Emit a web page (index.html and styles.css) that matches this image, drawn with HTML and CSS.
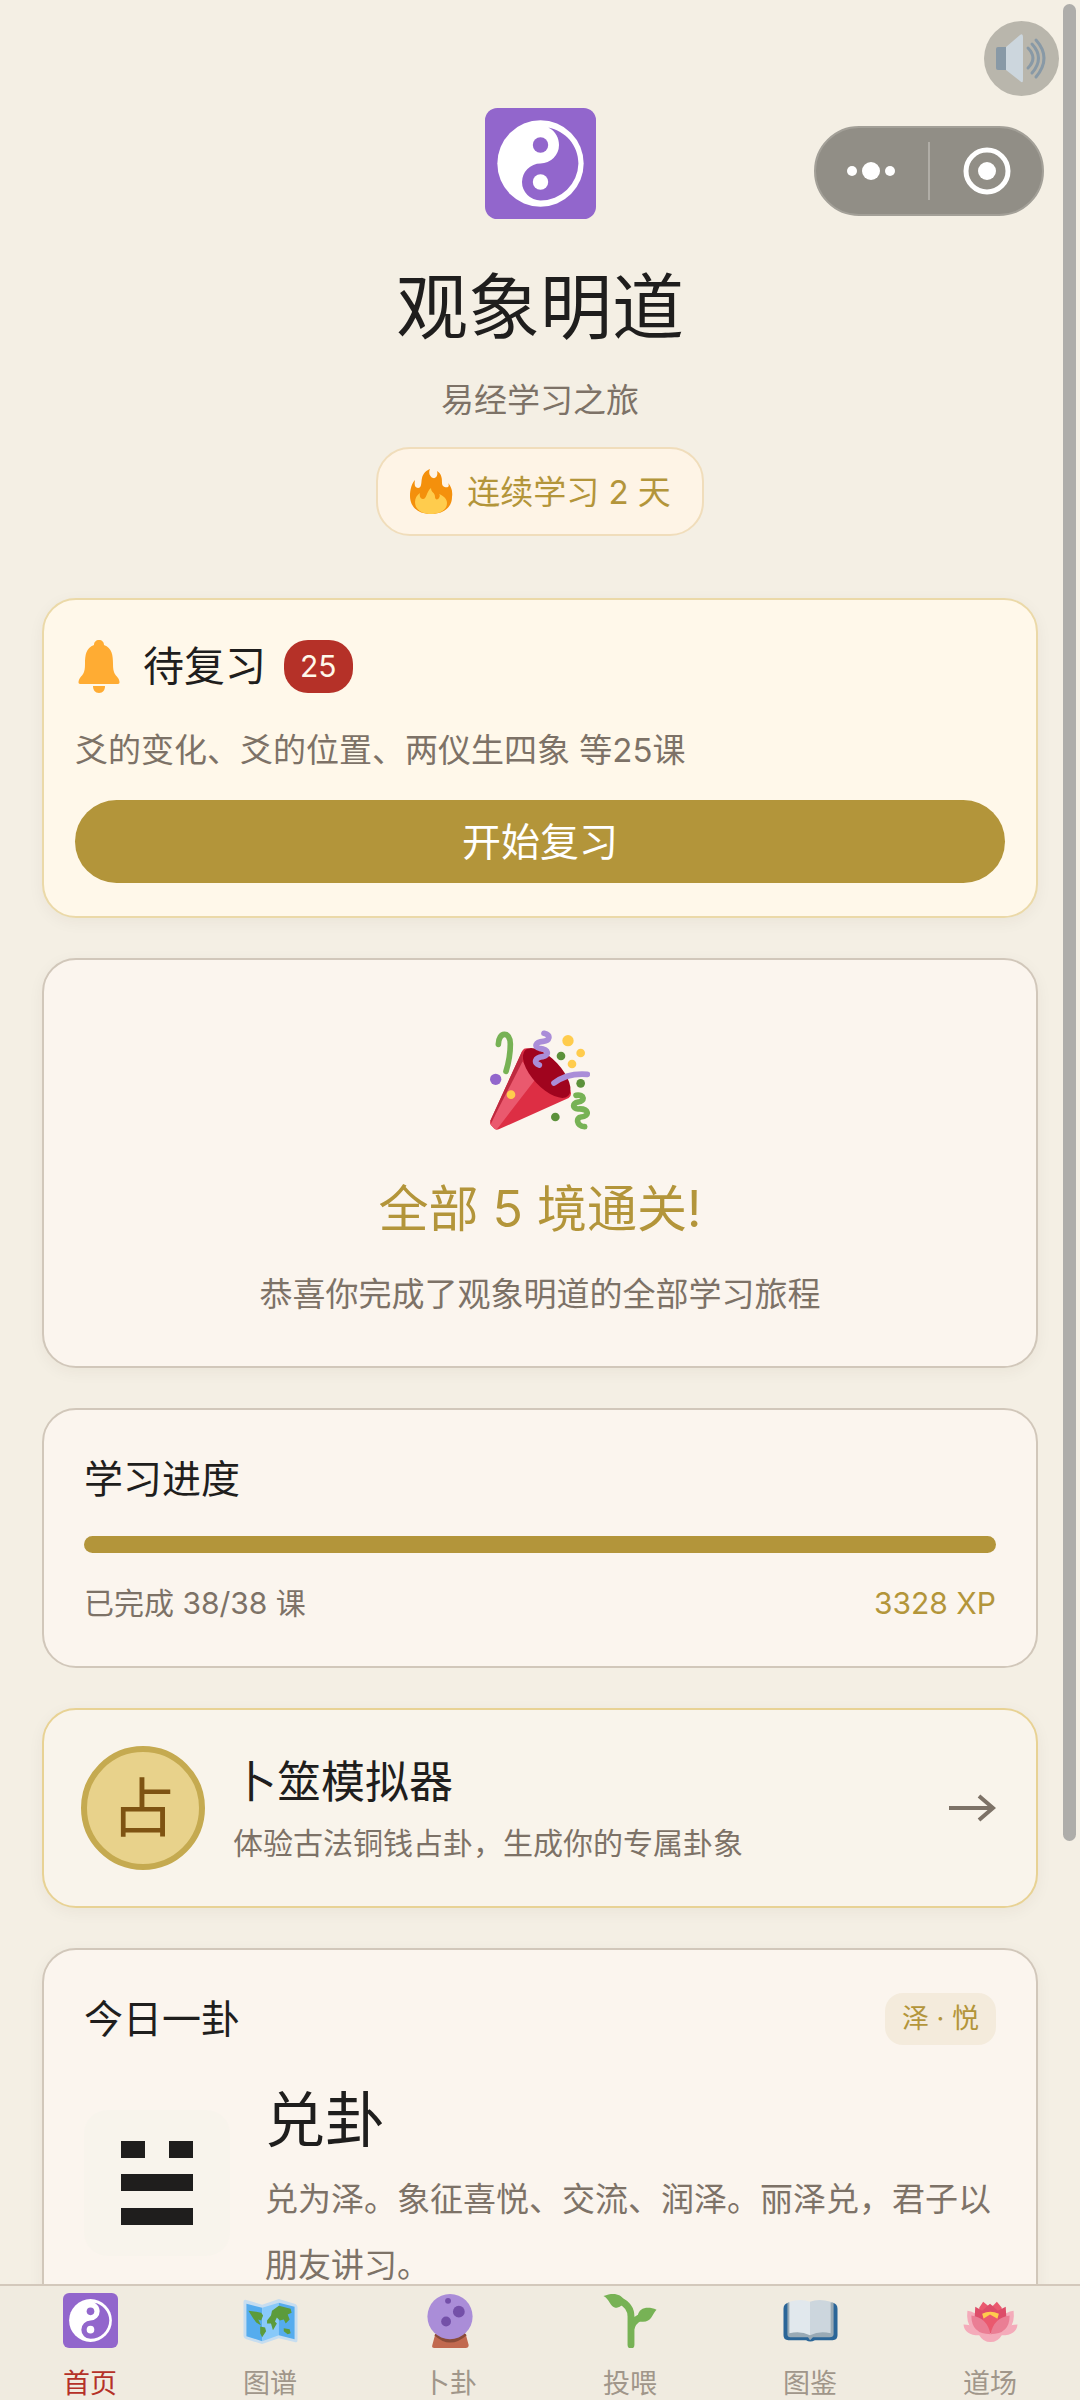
FILE: index.html
```html
<!DOCTYPE html>
<html lang="zh-CN">
<head>
  <meta charset="UTF-8">
  <meta name="viewport" content="width=device-width, initial-scale=1.0">
  <title>观象明道</title>
  <link rel="stylesheet" href="styles.css">
</head>
<body>
  <!-- 公用图标 -->
  <svg class="sprite" aria-hidden="true">
    <symbol id="icon-taiji" viewBox="0 0 36 36">
      <rect width="36" height="36" rx="4" fill="#9266CC"/>
      <circle cx="18" cy="18" r="14" fill="#FFF"/>
      <path d="M20.5 6.3C23 7.500 24 9.800 24 12a6 6 0 0 1-6 6a6 6 0 0 0 0 12A12.300 12.300 0 0 0 30.300 18C30.300 12 26 7.400 20.500 6.300Z" fill="#9266CC"/>
      <circle cx="18" cy="12" r="2.500" fill="#9266CC"/>
      <circle cx="18" cy="24" r="2.500" fill="#FFF"/>
    </symbol>
  </svg>

  <!-- 右上角悬浮按钮 -->
  <button class="sound-btn" aria-label="声音">
    <svg viewBox="0 0 75 75">
      <rect x="12" y="26" width="14" height="23" rx="2" fill="#8899A6"/>
      <path d="M22 26L36 14Q39 12 39 16V59Q39 63 36 60L22 49Z" fill="#CCD6DD"/>
      <g fill="none" stroke="#8899A6" stroke-width="3" stroke-linecap="round">
        <path d="M44 27Q54 37 44 47"/>
        <path d="M48 23Q61 37 48 52"/>
        <path d="M52 19Q68 37 52 56"/>
      </g>
    </svg>
  </button>
  <div class="capsule">
    <button aria-label="更多">
      <svg viewBox="0 0 50 50"><g fill="#FFF"><circle cx="5" cy="25" r="5"/><circle cx="24" cy="25" r="9"/><circle cx="43" cy="25" r="5"/></g></svg>
    </button>
    <span class="capsule-line"></span>
    <button aria-label="关闭">
      <svg viewBox="0 0 50 50"><circle cx="26" cy="25" r="21" fill="none" stroke="#FFF" stroke-width="5"/><circle cx="26" cy="25" r="9" fill="#FFF"/></svg>
    </button>
  </div>
  <div class="scroll-thumb"></div>

  <main class="content">
    <header class="header">
      <svg class="logo"><use href="#icon-taiji"/></svg>
      <h1>观象明道</h1>
      <p class="subtitle">易经学习之旅</p>
      <div class="streak">
        <svg class="flame" viewBox="0 0 44 46">
          <path d="M22 45C8 45 1 37 1 27C1 20 3 14 6 11C5 16 6 19 9 19C13 19 12 13 13 9C14 4 18 1 21 0C19 4 21 8 24 9C28 10 29 5 28 2C33 5 33 10 33 14C33 18 37 19 39 18C40 17 40 16 39 14C42 17 44 22 43 28C43 38 35 45 22 45Z" fill="#F4900C"/>
          <path d="M22 45C12 45 6 40 6 33C6 29 8 26 11 24C10 28 12 30 14 30C18 30 17 23 22 19C22 24 26 23 26 28C26 31 29 31 30 29C31 27 31 26 30 25C35 27 38 30 38 34C38 41 31 45 22 45Z" fill="#FFCC4D"/>
        </svg>
        <span>连续学习 2 天</span>
      </div>
    </header>

    <!-- 待复习 -->
    <section class="card review-card">
      <div class="review-head">
        <svg class="bell" viewBox="0 0 44 53" fill="#FFAC33">
          <path d="M22 0C25 0 27 2 27 5C35 8 36 15 36 24C36 33 38 34 41 38C43 41 43 44 41 44H3C1 44 1 41 3 38C6 34 8 33 8 24C8 15 9 8 17 5C17 2 19 0 22 0Z"/>
          <path d="M16 46H28C28 50 26 53 22 53C18 53 16 50 16 46Z"/>
        </svg>
        <h2>待复习</h2>
        <span class="badge">25</span>
      </div>
      <p class="text">爻的变化、爻的位置、两仪生四象 等25课</p>
      <button class="review-btn">开始复习</button>
    </section>

    <!-- 通关 -->
    <section class="card finish-card">
      <svg class="popper" viewBox="90 58 300 300">
        <path d="M187 120Q193 110 207 114C250 125 320 190 333 246Q334 256 326 262L118 355Q108 360 102 353L92 342Q89 337 91 330Z" fill="#DD2E44"/>
        <path d="M186 150L227 205L112 354Q106 358 102 353L92 342L163 185Z" fill="#EA596E"/>
        <path d="M187 120L91 330L94 335L188 152Z" fill="#BE2A3F"/>
        <ellipse cx="260" cy="187" rx="94" ry="43" transform="rotate(47 260 187)" fill="#A0041E"/>
        <g fill="none" stroke-linecap="round" stroke-linejoin="round" stroke-width="17">
          <path d="M115 101C115 63 151 60 151 100Q151 140 138 182" stroke="#77B255"/>
          <path d="M252 68C275 74 268 91 250 92C225 93 222 110 238 113C268 116 268 134 248 138C224 141 220 157 238 163" stroke="#AA8DD8"/>
          <path d="M282 217Q323 186 382 191" stroke="#AA8DD8"/>
          <path d="M348 254C375 250 375 272 355 274C337 277 336 294 354 295C388 293 390 317 363 319C348 320 348 346 374 348" stroke="#77B255"/>
        </g>
        <g fill="#FFCC4D"><circle cx="324" cy="90" r="17"/><circle cx="362" cy="127" r="13"/><circle cx="336" cy="160" r="13"/><circle cx="153" cy="252" r="13"/></g>
        <g fill="#5C913B"><circle cx="303" cy="136" r="13"/><circle cx="362" cy="218" r="13"/><circle cx="286" cy="319" r="13"/></g>
        <circle cx="107" cy="206" r="17" fill="#9266CC"/>
      </svg>
      <h2>全部 5 境通关!</h2>
      <p class="text">恭喜你完成了观象明道的全部学习旅程</p>
    </section>

    <!-- 学习进度 -->
    <section class="card progress-card">
      <h3>学习进度</h3>
      <div class="progress"><div class="progress-fill" style="width: 100%"></div></div>
      <div class="progress-info">
        <span>已完成 38/38 课</span>
        <span class="xp">3328 XP</span>
      </div>
    </section>

    <!-- 卜筮模拟器 -->
    <a href="#" class="card divine-card">
      <span class="coin">占</span>
      <span class="divine-text">
        <strong>卜筮模拟器</strong>
        <span>体验古法铜钱占卦，生成你的专属卦象</span>
      </span>
      <svg class="arrow" viewBox="0 0 48 28" fill="none" stroke="#7D7267" stroke-width="4"><path d="M1 14H45M31 2L45 14L31 26"/></svg>
    </a>

    <!-- 今日一卦 -->
    <section class="card daily-card">
      <div class="daily-head">
        <h3>今日一卦</h3>
        <span class="tag">泽 · 悦</span>
      </div>
      <div class="daily-body">
        <div class="gua">
          <svg viewBox="0 0 72 84" fill="#1F1E1D"><path d="M0 0H24V17H0ZM48 0H72V17H48ZM0 33H72V50H0ZM0 67H72V84H0Z"/></svg>
        </div>
        <div class="daily-text">
          <h2>兑卦</h2>
          <p>兑为泽。象征喜悦、交流、润泽。丽泽兑，君子以朋友讲习。</p>
        </div>
      </div>
    </section>
  </main>

  <!-- 底部导航 -->
  <nav class="tabbar">
    <a href="#" class="active">
      <svg><use href="#icon-taiji"/></svg>
      首页
    </a>
    <a href="#">
      <svg viewBox="0 0 55 56">
        <path d="M0 9Q0 6 3 7L19 12L36 6L52 11Q55 12 55 15V48Q55 51 52 50L36 46L19 52L3 47Q0 46 0 43Z" fill="#C6DDF0"/>
        <path d="M3 11L19 15V49L3 44Z" fill="#55ACEE"/>
        <path d="M19 15L36 10V43L19 49Z" fill="#88C9F9"/>
        <path d="M36 10L52 14V47L36 43Z" fill="#55ACEE"/>
        <path d="M5 18L13 19L18 20L20 23L18 28L15 27L18 33L13 30L10 26ZM17 34L22 35L23 39L19 45L17 41ZM24 28L28 23L29 18L36 13L48 16L49 20L45 22L47 27L43 31L41 27L37 28L34 25L32 29L34 31L30 38L28 31L24 31ZM41 36L47 37L48 41L45 42L41 39Z" fill="#5C9B3B"/>
      </svg>
      图谱
    </a>
    <a href="#">
      <svg viewBox="0 0 55 56">
        <path d="M12 42H43L46 53Q46 56 43 56H11Q8 56 9 53Z" fill="#C1694F"/>
        <path d="M11 43Q27 58 44 43L41 40H14Z" fill="#8A4B38"/>
        <circle cx="27" cy="24" r="23" fill="#AA8DD8"/>
        <g fill="#7450A8"><circle cx="25" cy="8" r="3"/><circle cx="36" cy="19" r="6"/><circle cx="23" cy="29" r="5"/></g>
      </svg>
      卜卦
    </a>
    <a href="#">
      <svg viewBox="0 0 55 56">
        <path d="M28 53V24Q28 13 17 8M28 37Q29 29 37 25" fill="none" stroke="#77B255" stroke-width="7" stroke-linecap="round"/>
        <path d="M0 3C10-1 18 1 21 7C21 12 16 15 12 15C7 14 6 6 0 3Z" fill="#77B255"/>
        <path d="M54 17C45 13 36 15 35 23Q34 27 37 29C49 31 49 22 54 17Z" fill="#77B255"/>
      </svg>
      投喂
    </a>
    <a href="#">
      <svg viewBox="0 0 55 56">
        <path d="M5 10H50Q55 11 55 16V43Q55 48 50 48H32Q27 51 23 48H5Q0 48 0 43V16Q0 11 5 10Z" fill="#2B6698"/>
        <path d="M4 10H51V42Q51 45 47 45H30L27 48L25 45H7Q4 45 4 42Z" fill="#99AAB5"/>
        <path d="M27 9Q18 5 6 9V41Q17 38 27 43Z" fill="#E1E8ED"/>
        <path d="M27 9Q36 5 48 9V41Q37 38 27 43Z" fill="#CCD6DD"/>
      </svg>
      图鉴
    </a>
    <a href="#">
      <svg viewBox="0 0 55 56">
        <path d="M0 32Q7 32 12 35H43Q48 32 55 32Q54 43 39 43Q35 50 27.500 50Q20 50 16 43Q1 43 0 32Z" fill="#F4ABBA"/>
        <path d="M4 18Q19 20 27.500 42Q36 20 51 18Q54 42 27.500 42Q1 42 4 18Z" fill="#F4ABBA"/>
        <path d="M16 15L20 9L25 13L30 13L34 9L39 15L38 30H17Z" fill="#EA596E"/>
        <path d="M12 14L19 18L27 11L35 18L43 14L44 32L28 41L11 32Z" fill="#DD4D69"/>
        <path d="M19 21Q27 17 36 21L34 28H21Z" fill="#FFCC4D"/>
        <path d="M19 27L27 22L36 27L31 40H24Z" fill="#EA596E"/>
        <path d="M8 23Q24 25 27.500 42Q8 42 8 23ZM47 23Q31 25 27.500 42Q47 42 47 23Z" fill="#EA7E94"/>
      </svg>
      道场
    </a>
  </nav>
</body>
</html>
```
FILE: styles.css
```css
* {
  box-sizing: border-box;
}

body {
  margin: 0;
  height: 100vh;
  display: flex;
  flex-direction: column;
  background-color: #F4EFE4;
  color: #1F1E1D;
  font-family: Inter, "Noto Sans CJK SC", sans-serif;
}

h1, h2, h3, p {
  margin: 0;
  font-weight: 400;
}

a {
  color: inherit;
  text-decoration: none;
}

button {
  padding: 0;
  border: none;
  font-family: inherit;
  cursor: pointer;
}

svg {
  display: block;
  flex: none;
}

.sprite {
  position: absolute;
  width: 0;
  height: 0;
}

/* 悬浮按钮 */
.sound-btn {
  position: fixed;
  top: 21px;
  right: 21px;
  width: 75px;
  height: 75px;
  border-radius: 50%;
  background-color: #B9B6AC;
}

.capsule {
  position: fixed;
  top: 126px;
  right: 36px;
  width: 230px;
  height: 90px;
  border: 2px solid #A3A098;
  border-radius: 45px;
  background-color: #918E86;
  display: flex;
  align-items: center;
}

.capsule button {
  flex: 1;
  display: flex;
  justify-content: center;
  background: none;
}

.capsule svg {
  width: 50px;
  height: 50px;
}

.capsule-line {
  width: 2px;
  height: 58px;
  background-color: #B0ADA6;
}

.scroll-thumb {
  position: fixed;
  top: 4px;
  right: 4px;
  width: 13px;
  height: 1837px;
  border-radius: 7px;
  background-color: #AEADAA;
}

/* 内容区 */
.content {
  flex: 1;
  min-height: 0;
  overflow-y: auto;
  scrollbar-width: none;
  padding: 108px 42px 40px;
}

.header {
  display: flex;
  flex-direction: column;
  align-items: center;
  margin-bottom: 62px;
}

.logo {
  width: 111px;
  height: 111px;
}

h1 {
  margin-top: 38px;
  font-size: 72px;
  line-height: 100px;
}

.subtitle {
  margin: 19px 0 23px;
  font-size: 33px;
  line-height: 48px;
  color: #7D7267;
}

.streak {
  display: flex;
  align-items: center;
  gap: 14px;
  height: 89px;
  padding: 0 31px;
  border: 2px solid #F0DDBB;
  border-radius: 34px;
  background-color: #FEF4E6;
  font-size: 33px;
  line-height: 48px;
  color: #B3953A;
}

.flame {
  width: 44px;
  height: 46px;
}

/* 卡片 */
.card {
  display: block;
  margin-bottom: 40px;
  border: 2px solid #D1C7BA;
  border-radius: 34px;
  background-color: #FBF5EE;
  box-shadow: 0 4px 16px rgba(60, 40, 10, 0.05);
}

.text {
  font-size: 33px;
  line-height: 50px;
  color: #7D7267;
}

h3 {
  font-size: 39px;
  line-height: 50px;
}

.review-card {
  padding: 40px 31px 33px;
  border-color: #EBD9A8;
  background-color: #FFF8EA;
}

.review-head {
  display: flex;
  align-items: center;
  height: 53px;
  margin-bottom: 32px;
}

.review-head h2 {
  margin: 0 18px 0 20px;
  font-size: 41px;
  line-height: 53px;
}

.bell {
  width: 48px;
  height: 53px;
}

.badge {
  padding: 0 16px;
  border-radius: 24px;
  background-color: #B53128;
  color: #FFF8EA;
  font-size: 30px;
  line-height: 53px;
}

.review-btn {
  display: block;
  width: 100%;
  height: 83px;
  margin-top: 25px;
  border-radius: 42px;
  background-color: #B3953A;
  color: #FFF;
  font-size: 39px;
  line-height: 50px;
}

.finish-card {
  display: flex;
  flex-direction: column;
  align-items: center;
  padding: 70px 40px 47px;
}

.popper {
  width: 100px;
  height: 100px;
}

.finish-card h2 {
  margin: 44px 0 25px;
  font-size: 50px;
  line-height: 70px;
  color: #B3953A;
}

.progress-card {
  padding: 44px 40px 43px;
  box-shadow: none;
}

.progress {
  height: 17px;
  margin: 32px 0 30px;
  border-radius: 9px;
  background-color: #EAE2D2;
  overflow: hidden;
}

.progress-fill {
  height: 100%;
  background-color: #B3953A;
}

.progress-info {
  display: flex;
  justify-content: space-between;
  font-size: 30px;
  line-height: 40px;
  color: #7D7267;
}

.xp {
  color: #B3953A;
}

.divine-card {
  display: flex;
  align-items: center;
  padding: 36px 40px 36px 37px;
  border-color: #E8D294;
  background-color: #F9F4EB;
}

.coin {
  width: 124px;
  height: 124px;
  margin-right: 28px;
  border: 6px solid #C5AA50;
  border-radius: 50%;
  background-color: #E8D28B;
  color: #7E5312;
  font-size: 64px;
  line-height: 112px;
  text-align: center;
}

.divine-text {
  flex: 1;
  display: flex;
  flex-direction: column;
  gap: 9px;
  font-size: 30px;
  line-height: 44px;
  color: #7D7267;
}

.divine-text strong {
  font-size: 44px;
  line-height: 60px;
  font-weight: 400;
  color: #1F1E1D;
}

.arrow {
  width: 48px;
  height: 28px;
}

.daily-card {
  padding: 43px 40px;
}

.daily-head {
  display: flex;
  justify-content: space-between;
  align-items: center;
  margin-bottom: 35px;
}

.tag {
  padding: 0 17px;
  border-radius: 18px;
  background-color: #F4EBDC;
  color: #B3953A;
  font-size: 27px;
  line-height: 52px;
}

.daily-body {
  display: flex;
  gap: 35px;
}

.gua {
  display: flex;
  align-items: center;
  justify-content: center;
  width: 146px;
  height: 146px;
  margin-top: 30px;
  border-radius: 24px;
  background-color: #F8F4EC;
}

.gua svg {
  width: 72px;
  height: 84px;
}

.daily-text {
  flex: 1;
}

.daily-text h2 {
  margin-bottom: 6px;
  font-size: 60px;
  line-height: 80px;
}

.daily-text p {
  font-size: 33px;
  line-height: 66px;
  color: #7D7267;
}

/* 底部导航 */
.tabbar {
  display: flex;
  border-top: 2px solid #D3C8BB;
  background-color: #F0EBE0;
}

.tabbar a {
  flex: 1;
  display: flex;
  flex-direction: column;
  align-items: center;
  gap: 20px;
  padding-top: 7px;
  font-size: 27px;
  line-height: 32px;
  color: #A0968A;
}

.tabbar .active {
  color: #B53128;
}

.tabbar svg {
  width: 55px;
  height: 55px;
}
```
